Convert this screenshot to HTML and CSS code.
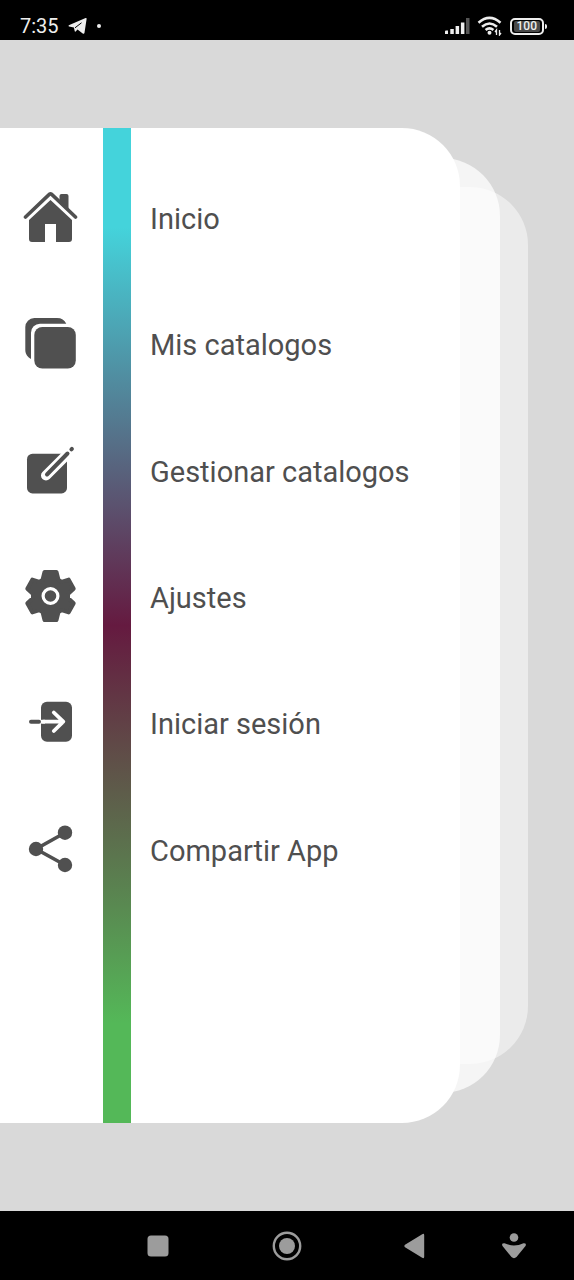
FILE: index.html
```
<!DOCTYPE html>
<html lang="es">
<head>
<meta charset="utf-8">
<meta name="viewport" content="width=device-width, initial-scale=1">
<title>Catalogos</title>
<link rel="stylesheet" href="styles.css">
</head>
<body>
<div class="screen">
  <header class="status">
    <div class="status-group">
      <time class="clock">7:35</time>
      <svg class="telegram" width="20" height="18" viewBox="0 0 20 18" aria-hidden="true"><path class="light" d="M.8 8.200 17.600 1.100q1.200-.4 1 .9L16.500 15.700q-.4 1.600-1.800.7L9.500 12.600 7.600 14.500q-.7.6-.9-.4L5.900 10.600 1 9.400q-.9-.4-.2-1.200z"/><path class="cut" d="M7 10.800 13.500 5.800"/></svg>
      <span class="dot"></span>
    </div>
    <div class="status-group status-right">
      <svg width="26" height="18" viewBox="0 0 26 18" aria-hidden="true"><path class="light" d="M1 14.500q0-1 1-1h2V17H1zM6.300 12h3.500v5H6.300zM11.600 9h3.500v8h-3.500zM16.900 5.500h3.500V17h-3.500z"/><path class="dim" d="M22 1h3.500v16H22z"/></svg>
      <svg width="26" height="20" viewBox="0 0 26 20" aria-hidden="true"><path class="wave" d="M1.500 6.700Q12.500-2.800 23.500 6.700M5 10.800Q12.500 4.200 20 10.800M8.600 14Q12.500 10.800 16.400 14"/><circle class="light" cx="12.500" cy="16.800" r="2"/><path class="arrows" d="M19.500 19v-5l-1.500 2M22.500 14v5l1.500-2"/></svg>
      <div class="battery"><span class="battery-level">100</span></div>
    </div>
  </header>

  <main class="stage">
    <div class="sheet sheet-back"></div>
    <div class="sheet sheet-middle"></div>
    <nav class="sheet drawer" aria-label="Menú">
      <ul class="menu">
        <li><a class="item" href="#inicio">
          <svg class="icon" viewBox="0 0 56 56" aria-hidden="true"><path d="M37.500 13V7q0-2 2-2h5q2 0 2 2v15z"/><path class="roof" d="M3.500 28 27.500 5.200q1-.8 2 0L53.500 28"/><path d="M28.500 11 50 31v19q0 3-3 3H34V35H23v18H10q-3 0-3-3V31z"/></svg>
          <span class="label">Inicio</span></a></li>
        <li><a class="item" href="#catalogos">
          <svg class="icon" viewBox="0 0 56 56" aria-hidden="true"><rect x="12.300" y="12" width="41.500" height="41.500" rx="8"/><path d="M44.300 8.700H18a9 9 0 0 0-9 9V44C6 42.500 3.300 39 3.300 35V12a9 9 0 0 1 9-9H35C39.500 3 42.500 5 44.300 8.700z"/></svg>
          <span class="label">Mis catalogos</span></a></li>
        <li><a class="item" href="#gestionar">
          <svg class="icon" viewBox="0 0 56 56" aria-hidden="true"><rect x="5" y="11.700" width="40" height="39.700" rx="5.500"/><path class="pencil-edge" d="M24 33.500 49 8.500"/><path class="pencil" d="M25 32.500 45.500 11.500M49.400 7.400 49.900 6.900"/></svg>
          <span class="label">Gestionar catalogos</span></a></li>
        <li><a class="item" href="#ajustes">
          <svg class="icon" viewBox="0 0 56 56" aria-hidden="true"><path class="gear" d="M22.500 4h12l2 8 3 1.800 7.200-2.200 5 9.200-5.700 5.200v4l5.700 5.200-5 9.200-7.200-2.200-3 1.800-2 8h-12l-2-8-3-1.800-7.200 2.200-5-9.200 5.700-5.200v-4l-5.700-5.200 5-9.200 7.200 2.200 3-1.800z"/><circle class="gear-ring" cx="28.500" cy="28" r="7.400"/></svg>
          <span class="label">Ajustes</span></a></li>
        <li><a class="item" href="#sesion">
          <svg class="icon" viewBox="0 0 56 56" aria-hidden="true"><rect x="19" y="7.700" width="31" height="40" rx="6"/><path class="arrow" d="M21 27.700H41M31.800 18.500 41.300 27.700 31.800 37"/><path class="arrow-tail" d="M19 27.700H23"/><path class="shaft" d="M9 27.700H17"/></svg>
          <span class="label">Iniciar sesión</span></a></li>
        <li><a class="item" href="#compartir">
          <svg class="icon" viewBox="0 0 56 56" aria-hidden="true"><path class="links" d="M43 11.700 14 28 43 44"/><circle cx="43" cy="11.700" r="7.200"/><circle cx="14" cy="28" r="7.200"/><circle cx="43" cy="44" r="7.200"/></svg>
          <span class="label">Compartir App</span></a></li>
      </ul>
    </nav>
  </main>

  <footer class="system-bar">
    <button class="key" type="button" aria-label="Recientes"><svg viewBox="0 0 32 32"><rect x="5.500" y="5.500" width="21" height="21" rx="3.500"/></svg></button>
    <button class="key" type="button" aria-label="Inicio"><svg viewBox="0 0 32 32"><circle cx="16" cy="16" r="8"/><circle class="home-ring" cx="16" cy="16" r="13.200"/></svg></button>
    <button class="key" type="button" aria-label="Atrás"><svg viewBox="0 0 32 32"><path d="M6 14.800 23.200 4.200q2-1 2 1v21.600q0 2-2 1L6 17.200q-1.600-1.200 0-2.400z"/></svg></button>
    <button class="key" type="button" aria-label="Ocultar"><svg viewBox="0 0 32 32"><circle cx="16" cy="7.500" r="4.300"/><path d="M6.500 13.200Q16 17.600 25.500 13.200q3.400-.2 2 2.700L18.500 27q-2.500 2.300-5 0L4.500 15.900q-1.400-2.900 2-2.700z"/></svg></button>
  </footer>
</div>
</body>
</html>
```
FILE: styles.css
```
* {
  box-sizing: border-box;
}

body {
  margin: 0;
  font-family: Roboto, "Liberation Sans", sans-serif;
  background: #d9d9d9;
}

.screen {
  display: flex;
  flex-direction: column;
  min-height: 100vh;
}

.status {
  display: flex;
  justify-content: space-between;
  height: 40px;
  padding: 12px 30px 0 20px;
  background: #000;
  color: #eee;
}

.status-group {
  display: flex;
  align-items: center;
  gap: 9px;
}

.status-right {
  gap: 7px;
}

.clock {
  font-size: 20px;
  line-height: 28px;
  font-weight: 400;
}

.dot {
  width: 4px;
  height: 4px;
  border-radius: 50%;
  background: #eee;
}

.light {
  fill: #eee;
}

.dim {
  fill: #555;
}

.cut {
  stroke: #000;
  stroke-width: 1;
}

.wave {
  fill: none;
  stroke: #eee;
  stroke-width: 2.6;
}

.arrows {
  fill: none;
  stroke: #eee;
  stroke-width: 1.3;
}

.battery {
  display: flex;
  align-items: center;
  position: relative;
  height: 17px;
  padding: 2px;
  border: 2px solid #eee;
  border-radius: 5px;
}

.battery::after {
  content: "";
  position: absolute;
  left: 100%;
  width: 2px;
  height: 5px;
  margin-left: 3px;
  border-radius: 0 2px 2px 0;
  background: #eee;
}

.battery-level {
  padding: 0 3px;
  border-radius: 2px;
  background: #484848;
  font-size: 12px;
  line-height: 11px;
  font-weight: 500;
}

.stage {
  display: grid;
  flex: 1;
  padding: 88px 0;
}

.sheet {
  grid-area: 1 / 1;
  border-radius: 0 58px 58px 0;
}

.sheet-back {
  margin: 59px 46px 59px 0;
  background: rgba(255, 255, 255, 0.48);
}

.sheet-middle {
  margin: 30px 74px 30px 0;
  background: rgba(255, 255, 255, 0.72);
}

.drawer {
  display: grid;
  margin-right: 114px;
  padding: 28px 0 209px;
  background:
    linear-gradient(#44d3db 10%, #651a40 50%, #54b858 90%) 103px 0 / 28px 100% no-repeat,
    #fff;
}

.menu {
  display: grid;
  grid-auto-rows: 1fr;
  margin: 0;
  padding: 0;
  list-style: none;
}

.item {
  display: flex;
  align-items: center;
  gap: 72px;
  height: 100%;
  padding-left: 22px;
  color: #4f4f4f;
  text-decoration: none;
}

.icon {
  flex: none;
  width: 56px;
  height: 56px;
  margin-bottom: 4px;
  fill: #505050;
}

.label {
  font-size: 29px;
  line-height: 36px;
}

.roof,
.links {
  fill: none;
  stroke: #505050;
  stroke-width: 3.6;
  stroke-linecap: round;
}

.pencil-edge {
  stroke: #fff;
  stroke-width: 10;
  stroke-linecap: round;
}

.pencil {
  stroke: #505050;
  stroke-width: 4;
  stroke-linecap: round;
}

.gear {
  stroke: #505050;
  stroke-width: 4;
  stroke-linejoin: round;
}

.gear-ring {
  fill: none;
  stroke: #fff;
  stroke-width: 3.2;
}

.shaft {
  stroke: #505050;
  stroke-width: 4;
  stroke-linecap: round;
}

.arrow {
  fill: none;
  stroke: #fff;
  stroke-width: 3.8;
  stroke-linecap: round;
  stroke-linejoin: round;
}

.arrow-tail {
  stroke: #fff;
  stroke-width: 3.8;
}

.system-bar {
  display: grid;
  grid-template-columns: 13fr 13fr 13fr 7fr;
  height: 69px;
  padding: 0 25px 0 94px;
  background: #000;
}

.key {
  display: grid;
  place-items: center;
  padding: 0;
  border: 0;
  background: none;
}

.key svg {
  width: 32px;
  height: 32px;
  fill: #9c9c9c;
}

.key .home-ring {
  fill: none;
  stroke: #9c9c9c;
  stroke-width: 2.4;
}
```
